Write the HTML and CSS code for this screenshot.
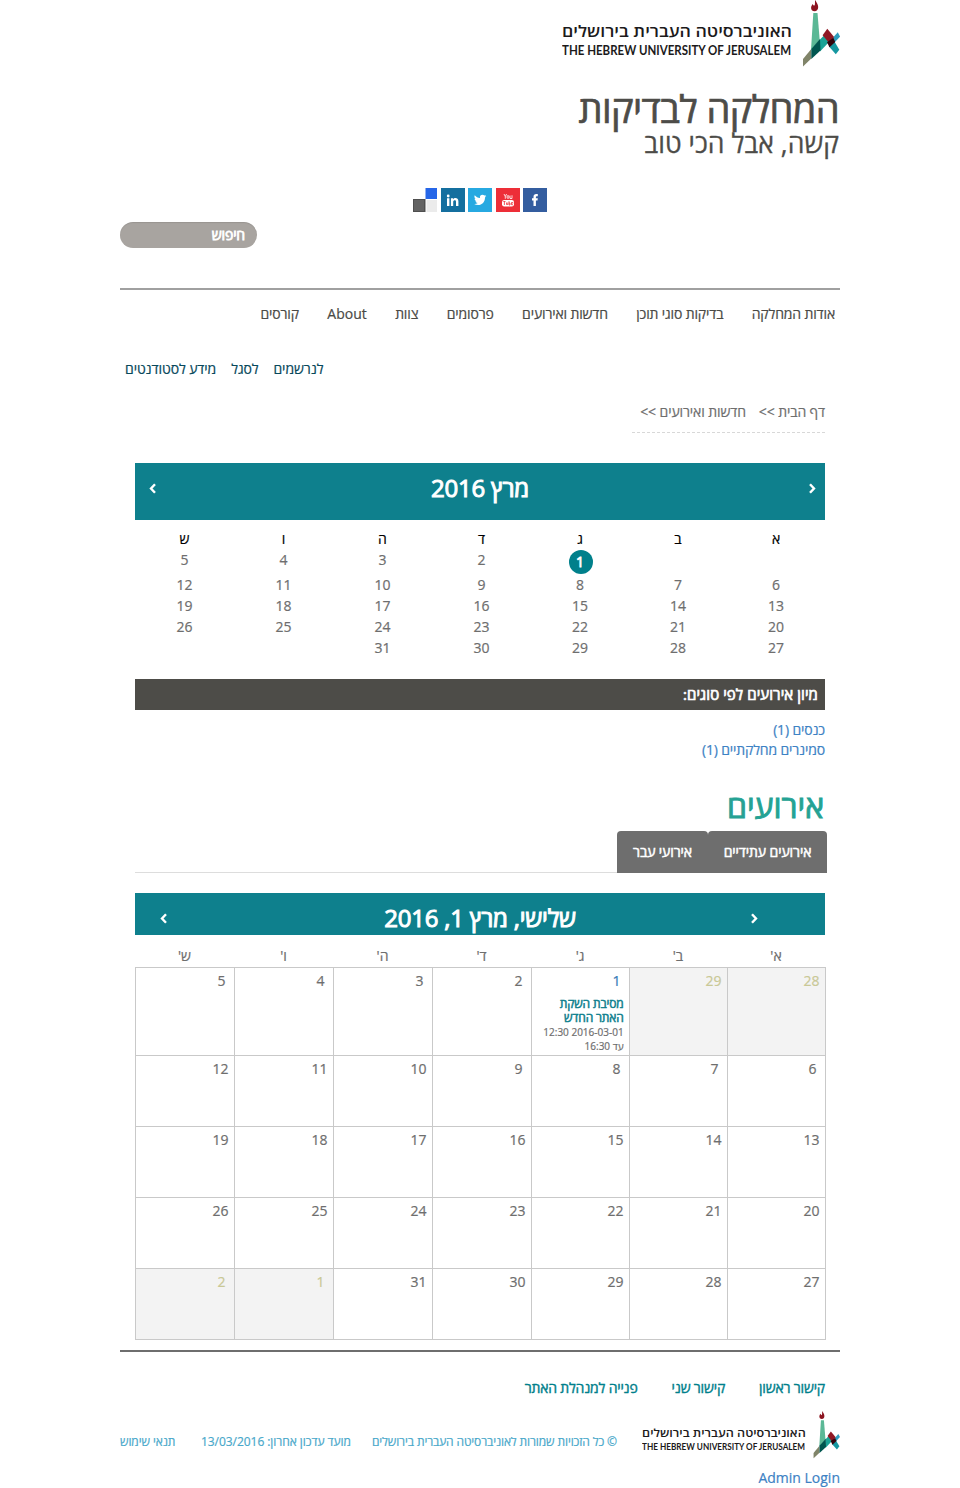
FILE: index.html
```
<!DOCTYPE html>
<html lang="he" dir="rtl">
<head>
<meta charset="utf-8">
<title>המחלקה לבדיקות</title>
<link rel="stylesheet" href="styles.css">
</head>
<body>
<div class="page">
  <header>
    <svg class="logo" viewBox="562 0 278 68">
      <path fill="#8c1420" d="M815.600 0C816 2.400 818.200 4 818.200 7c0 2.400-1.400 4.200-3.600 4.200-2.300 0-3.700-1.700-3.500-3.800.2-1.600 1.100-2.300 1.500-3.400.8 1 1 1.700 1.500 1.800C815.800 4.800 814.300 2 815.600 0z"/>
      <path fill="#5bb896" d="M813.300 13h4.200l2.200 27-8.700 10z"/>
      <path fill="#808469" d="M803 59l8.300-10v9.500l-8.300 8z"/>
      <path fill="#1aa396" d="M819.500 40l5.500-5.500 5.500 6-10.500 11z"/>
      <path fill="#00564f" d="M811.300 49l8.700-10 .5 11.500-9.200 8.500z"/>
      <path fill="#2d9cbd" d="M837.800 32.300l2.300 4.400-5.600 5.800-2.300-4z"/>
      <path fill="#1597a0" d="M834.600 41.700l4.700 8-3.500 4.500-7-8z"/>
      <path fill="#8f1824" d="M827.300 28.800l6.800 8.200-5.100 5.800-6.400-7.500z"/>
      <path fill="#32050d" d="M833.300 37.800l1.900 4.200-5.700 5.300-2.500-5z"/>
      <text class="logo-he" x="792" y="37" textLength="230" lengthAdjust="spacingAndGlyphs">האוניברסיטה העברית בירושלים</text>
      <text class="logo-en" x="562" y="55" textLength="229" lengthAdjust="spacingAndGlyphs">THE HEBREW UNIVERSITY OF JERUSALEM</text>
    </svg>
    <h1>המחלקה לבדיקות</h1>
    <p class="slogan">קשה, אבל הכי טוב</p>
    <div class="social">
      <svg width="24" height="24"><path fill="#345d9f" d="M0 0h24v24H0z"/><path fill="#fff" d="M10.500 18v-5.600H9v-2.200h1.500V8.700c0-1.800 1-2.700 2.700-2.700h1.600v2.200h-1.100c-.6 0-.8.3-.8.8v1.200h1.900l-.3 2.200h-1.600V18z"/></svg>
      <svg width="24" height="24"><path fill="#ed2e38" d="M0 0h24v24H0z"/><rect x="6" y="12" width="12" height="6.500" rx="2.200" fill="#fff"/><path fill="none" stroke="#fff" stroke-width=".8" d="M8 6l1.300 2.500L10.600 6M9.300 8.500v2.300M14 7.500v3h2V7.300"/><ellipse cx="12" cy="9" rx="1" ry="1.500" fill="none" stroke="#fff" stroke-width=".8"/><path fill="none" stroke="#ed2e38" stroke-width=".8" d="M7.300 13.500h2.200M8.400 13.500V17M10.500 14.500v2h1.300v-2M13 13.200V17h1v-2h-1M17 16.700h-1.500v-2.200h1.300v1.100"/></svg>
      <svg width="24" height="24"><path fill="#27a9e1" d="M0 0h24v24H0z"/><path fill="#fff" d="M6.700 7.200c1.400 1.700 3.200 2.600 5.300 2.700-.4-1.900.9-3.100 2.500-3.100.8 0 1.400.3 1.900.8l1.600-.6-1.100 1.400 1.400-.3-1.300 1.300c.1 4.400-3 7.600-6.900 7.600-1.500 0-2.800-.4-3.900-1.100 1.300.1 2.500-.2 3.500-1-1.100-.1-1.900-.7-2.200-1.700h1c-1.200-.4-1.900-1.300-1.900-2.400l1 .2c-1.100-.9-1.500-2.300-.9-3.800z"/></svg>
      <svg width="24" height="24"><path fill="#146f9f" d="M0 0h24v24H0z"/><g fill="#fff"><circle cx="7.200" cy="8" r="1.400"/><path d="M6 10.300h2.400V18H6zM9.900 10.300h2.200v1c1.300-1.900 5.300-1.700 5.300 2V18H15v-4.200c0-2.200-2.800-1.900-2.800 0V18H9.900z"/></g></svg>
      <svg width="24" height="24"><path fill="#2666e8" d="M12.500 0H24v11H12.500z"/><path fill="#4f4f4f" d="M0 11h12.500v13H0z"/><path fill="#636363" d="M1 12h10v11H1z"/><path fill="#ebebeb" d="M13.500 12H24v12H13.500z"/></svg>
    </div>
    <div class="search">חיפוש</div>
  </header>

  <nav class="main-nav">
    <a>אודות המחלקה</a><a>בדיקות סוגי תוכן</a><a>חדשות ואירועים</a><a>פרסומים</a><a>צוות</a><a class="latin">About</a><a>קורסים</a>
  </nav>
  <nav class="sub-nav"><a>לנרשמים</a><a>לסגל</a><a>מידע לסטודנטים</a></nav>

  <main>
    <div class="crumbs"><a>דף הבית &gt;&gt;</a><a>חדשות ואירועים &gt;&gt;</a></div>

    <div class="cal-head mini-head">
      <svg class="arrow" viewBox="0 0 7 11"><path d="M1 1.200l4 4.300-4 4.300"/></svg>
      <h2>מרץ 2016</h2>
      <svg class="arrow" viewBox="0 0 7 11"><path d="M6 1.200L2 5.500l4 4.300"/></svg>
    </div>
    <div class="mini">
      <b>א</b><b>ב</b><b>ג</b><b>ד</b><b>ה</b><b>ו</b><b>ש</b>
      <i></i><i></i><i><span class="today">1</span></i><i>2</i><i>3</i><i>4</i><i>5</i>
      <i>6</i><i>7</i><i>8</i><i>9</i><i>10</i><i>11</i><i>12</i>
      <i>13</i><i>14</i><i>15</i><i>16</i><i>17</i><i>18</i><i>19</i>
      <i>20</i><i>21</i><i>22</i><i>23</i><i>24</i><i>25</i><i>26</i>
      <i>27</i><i>28</i><i>29</i><i>30</i><i>31</i><i></i><i></i>
    </div>

    <h3 class="filter">מיון אירועים לפי סוגים:</h3>
    <div class="types"><a>כנסים (1)</a><a>סמינרים מחלקתיים (1)</a></div>

    <h2 class="events">אירועים</h2>
    <div class="tabs"><a class="t1">אירועים עתידיים</a><a class="t2">אירועי עבר</a></div>

    <div class="cal-head big-head">
      <svg class="arrow" viewBox="0 0 7 11"><path d="M1 1.200l4 4.300-4 4.300"/></svg>
      <h2>שלישי, מרץ 1, 2016</h2>
      <svg class="arrow" viewBox="0 0 7 11"><path d="M6 1.200L2 5.500l4 4.300"/></svg>
    </div>
    <div class="weekdays"><span>א'</span><span>ב'</span><span>ג'</span><span>ד'</span><span>ה'</span><span>ו'</span><span>ש'</span></div>
    <div class="month">
      <div class="out"><span>28</span></div><div class="out"><span>29</span></div>
      <div><span class="one link">1</span>
        <a class="event">מסיבת השקת<br>האתר החדש</a>
        <p class="time"><bdi dir="ltr">12:30 2016-03-01</bdi><br>עד 16:30</p>
      </div>
      <div><span class="one">2</span></div><div><span class="one">3</span></div><div><span class="one">4</span></div><div><span class="one">5</span></div>
      <div><span class="one">6</span></div><div><span class="one">7</span></div><div><span class="one">8</span></div><div><span class="one">9</span></div><div><span>10</span></div><div><span>11</span></div><div><span>12</span></div>
      <div><span>13</span></div><div><span>14</span></div><div><span>15</span></div><div><span>16</span></div><div><span>17</span></div><div><span>18</span></div><div><span>19</span></div>
      <div><span>20</span></div><div><span>21</span></div><div><span>22</span></div><div><span>23</span></div><div><span>24</span></div><div><span>25</span></div><div><span>26</span></div>
      <div><span>27</span></div><div><span>28</span></div><div><span>29</span></div><div><span>30</span></div><div><span>31</span></div><div class="out"><span class="one">1</span></div><div class="out"><span class="one">2</span></div>
    </div>
  </main>

  <footer>
    <div class="foot-links"><a>קישור ראשון</a><a>קישור שני</a><a>פנייה למנהלת האתר</a></div>
    <div class="foot-row">
      <svg class="logo-small" viewBox="562 0 278 68">
        <path fill="#8c1420" d="M815.600 0C816 2.400 818.200 4 818.200 7c0 2.400-1.400 4.200-3.600 4.200-2.300 0-3.700-1.700-3.500-3.800.2-1.600 1.100-2.300 1.500-3.400.8 1 1 1.700 1.500 1.800C815.800 4.800 814.300 2 815.600 0z"/>
        <path fill="#5bb896" d="M813.300 13h4.200l2.200 27-8.700 10z"/>
        <path fill="#808469" d="M803 59l8.300-10v9.500l-8.300 8z"/>
        <path fill="#1aa396" d="M819.500 40l5.500-5.500 5.500 6-10.500 11z"/>
        <path fill="#00564f" d="M811.300 49l8.700-10 .5 11.500-9.200 8.500z"/>
        <path fill="#2d9cbd" d="M837.800 32.300l2.300 4.400-5.600 5.800-2.300-4z"/>
        <path fill="#1597a0" d="M834.600 41.700l4.700 8-3.500 4.500-7-8z"/>
        <path fill="#8f1824" d="M827.300 28.800l6.800 8.200-5.100 5.800-6.400-7.500z"/>
        <path fill="#32050d" d="M833.300 37.800l1.900 4.200-5.700 5.300-2.500-5z"/>
        <text class="logo-he" x="792" y="37" textLength="230" lengthAdjust="spacingAndGlyphs">האוניברסיטה העברית בירושלים</text>
        <text class="logo-en" x="562" y="55" textLength="229" lengthAdjust="spacingAndGlyphs">THE HEBREW UNIVERSITY OF JERUSALEM</text>
      </svg>
      <span class="copy">© כל הזכויות שמורות לאוניברסיטה העברית בירושלים</span>
      <span class="updated">מועד עדכון אחרון: 13/03/2016</span>
      <span class="terms">תנאי שימוש</span>
    </div>
    <a class="login">Admin Login</a>
  </footer>
</div>
</body>
</html>
```
FILE: styles.css
```
* { box-sizing: border-box; margin: 0; padding: 0; }
body { background: #fff; font: 14px/20px "Open Sans", "Noto Sans", "DejaVu Sans", sans-serif; color: #6e6e6e; -webkit-text-stroke: .2px; }
a, span, h1, h2, h3, p { white-space: nowrap; font-weight: 400; }
.page { width: 720px; margin: 0 auto; }
header { height: 290px; border-bottom: 2px solid #a0a0a0; display: flex; flex-direction: column; align-items: flex-start; }
.logo { width: 278px; height: 68px; display: block; }
.logo-he { font: 600 16px "Open Sans", "Noto Sans", sans-serif; fill: #1c1a1b; direction: rtl; }
.logo-en { font: 700 12.500px Lato, sans-serif; fill: #1c1a1b; direction: ltr; -webkit-text-stroke: 0; }
h1 { font-size: 38px; line-height: 42px; margin-top: 19px; padding-right: 1px; color: #4d4c48; letter-spacing: -.600px; -webkit-text-stroke: .7px; }
.slogan { font-size: 26.500px; line-height: 28px; margin-top: 0; padding-right: 1px; color: #4d4c48; letter-spacing: .050px; -webkit-text-stroke: .3px; }
.social { display: flex; gap: 3.500px; margin: 31px auto 0; height: 24px; }
.search { width: 137px; height: 26px; margin-top: 10px; margin-right: auto; border-radius: 13px; background: #a8a4a0; color: #fff; padding: 3px 12px; letter-spacing: -.150px; -webkit-text-stroke: .8px; box-shadow: inset 0 1px 1px #00000018; }

.main-nav { display: flex; height: 48px; padding: 14px 5px 0; gap: 28.400px; color: #4a4a46; letter-spacing: -.150px; }
.latin { letter-spacing: 0; }
.sub-nav { display: flex; height: 42px; margin-top: 21px; padding-left: 5px; justify-content: flex-end; gap: 15px; color: #07485b; letter-spacing: -.090px; }

main { padding: 0 15px; }
.crumbs { display: flex; gap: 13px; width: 193px; height: 32px; padding-top: 1px; border-bottom: 1px dashed #d8d8d8; letter-spacing: -.110px; }
.cal-head { display: flex; justify-content: space-between; background: #0e808d; color: #fff; }
.cal-head h2 { flex: 1; text-align: center; font-size: 24px; line-height: 32px; letter-spacing: -.200px; -webkit-text-stroke: 1px; }
.arrow { width: 7px; height: 11px; margin-top: 11px; fill: none; stroke: #fff; stroke-width: 2.400; }
.mini-head { height: 57px; margin-top: 30px; padding: 9px 9px 0 14px; }
.mini-head h2 { padding-right: 5px; }
.mini, .weekdays, .month { display: grid; grid-template-columns: repeat(3, 98px) repeat(4, 99px); text-align: center; }
.mini { grid-template-rows: 21px 25px repeat(4, 21px); margin-top: 9px; margin-left: -1px; height: 150px; }
.mini b, .mini i { font-weight: 400; font-style: normal; }
.mini b { color: #000; }
.today { display: block; width: 24px; height: 24px; margin: 0 36.500px 0 0; border-radius: 50%; background: #00808b; color: #fff; line-height: 24px; padding-right: 1px; -webkit-text-stroke: .8px; }
.filter { height: 31px; background: #4d4c48; color: #fff; font-size: 15px; line-height: 31px; padding-right: 7px; letter-spacing: .080px; -webkit-text-stroke: .7px; }
.types { display: flex; flex-direction: column; margin-top: 10px; color: #3d82c4; letter-spacing: -.150px; }
.events { font-size: 32px; line-height: 44px; height: 44px; margin-top: 24px; padding-right: 1px; color: #25a294; letter-spacing: 0; -webkit-text-stroke: .9px; }
.tabs { display: flex; height: 42px; margin-top: 3px; border-bottom: 1px solid #ddd; margin-right: -2px; }
.tabs a { height: 42px; background: #6e6e6e; color: #fff; border-radius: 4px 4px 0 0; text-align: center; line-height: 42px; letter-spacing: -.100px; -webkit-text-stroke: .5px; }
.t1 { width: 119px; }
.t2 { width: 91px; }
.big-head { height: 42px; margin-top: 20px; padding: 9px 67px 0 25px; }
.big-head h2 { padding-left: 42px; }
.weekdays { margin-left: -1px; height: 32px; padding-top: 11px; }
.month { grid-template-rows: 88px repeat(4, 71px); margin: 0 -1px 0 0; border-top: 1px solid #c9c9c9; border-right: 1px solid #c9c9c9; text-align: right; }
.month > div { border-left: 1px solid #c9c9c9; border-bottom: 1px solid #c9c9c9; padding: 3px 3.400px 0 0; }
.month span { display: block; width: 20px; text-align: center; }
.month .one { width: 18px; }
.month .out { background: #f3f3f3; color: #c9c896; }
.month .link { color: #337ab7; }
.event { display: block; margin: 6px 2px 0 0; font-size: 12px; line-height: 14px; color: #0e808d; letter-spacing: -.150px; -webkit-text-stroke: .5px; }
.time { font-size: 10px; line-height: 14px; margin-right: 2px; }

footer { margin-top: 10px; border-top: 2px solid #6e6e6e; }
.foot-links { display: flex; gap: 34px; padding: 26px 15px 0; height: 59px; color: #00808b; letter-spacing: -.180px; -webkit-text-stroke: .4px; }
.foot-row { display: flex; align-items: flex-start; height: 48px; font-size: 12px; color: #49a8ca; letter-spacing: -.120px; }
.foot-row span { margin-top: 21px; }
.logo-small { width: 198px; height: 48.400px; letter-spacing: 0; }
.copy { margin-right: 25px; }
.updated { margin-right: 21px; letter-spacing: -.050px; }
.terms { margin-right: auto; letter-spacing: -.080px; }
.login { display: block; color: #3d82c4; margin-top: 9px; direction: ltr; text-align: right; }
```
